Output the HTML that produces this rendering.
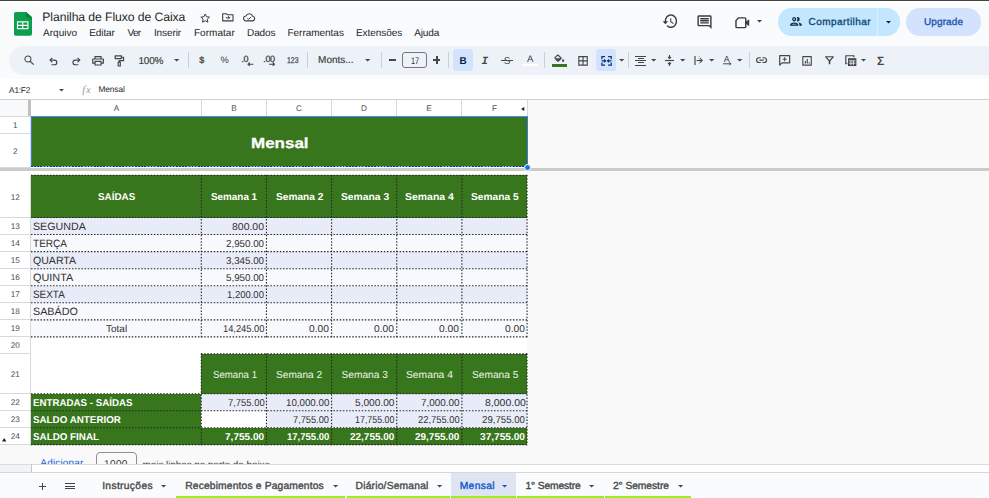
<!DOCTYPE html>
    <html><head><meta charset="utf-8"><title>Planilha de Fluxo de Caixa</title>
    <style>
    *{box-sizing:border-box;margin:0;padding:0}
    html,body{width:989px;height:498px;overflow:hidden;background:#f9fbfd;text-rendering:geometricPrecision;font-family:"Liberation Sans",sans-serif;color:#1f1f1f}
    .abs{position:absolute}
    .t{position:absolute;white-space:nowrap;line-height:1}
    svg{position:absolute;overflow:visible}
    </style></head><body>
    
<div class="abs" style="left:0px;top:0px;width:989px;height:1.1px;background:#454545;"></div>
<div class="abs" style="left:0px;top:1.1px;width:989px;height:1.5px;background:#ffffff;"></div>
<svg style="left:14px;top:11.800px" width="18" height="23.700" viewBox="0 0 18 23.700">
    <path d="M1.800 0H12L18 5.200V21.900a1.800 1.800 0 0 1-1.800 1.800H1.800A1.800 1.800 0 0 1 0 21.900V1.800A1.800 1.800 0 0 1 1.800 0z" fill="#0c9f4e"/>
    <path d="M12 0L18 5.200V8.500L12 5.200z" fill="#0a8a42" opacity="0.55"/>
    <path d="M12 0L18 5.200h-4.400A1.600 1.600 0 0 1 12 3.600z" fill="#07803a"/>
    <path d="M2.900 9.300h11.600v8H2.900z M4.100 10.500v2.200h4v-2.200z M9.300 10.500v2.200h4v-2.200z M4.100 13.900v2.200h4v-2.200z M9.300 13.900v2.200h4v-2.200z" fill="#f3faf5" fill-rule="evenodd"/>
    </svg>
<div class="t" style="left:42.30px;top:11px;font-size:12.2px;color:#1f1f1f;letter-spacing:-0.078px;">Planilha de Fluxo de Caixa</div>
<div class="t" style="left:43.10px;top:29px;font-size:10px;color:#1f1f1f;">Arquivo</div>
<div class="t" style="left:89.20px;top:29px;font-size:10px;color:#1f1f1f;letter-spacing:-0.084px;">Editar</div>
<div class="t" style="left:127.40px;top:29px;font-size:10px;color:#1f1f1f;letter-spacing:-0.605px;">Ver</div>
<div class="t" style="left:153.90px;top:29px;font-size:10px;color:#1f1f1f;letter-spacing:-0.080px;">Inserir</div>
<div class="t" style="left:193.90px;top:29px;font-size:10px;color:#1f1f1f;letter-spacing:0.049px;">Formatar</div>
<div class="t" style="left:247.10px;top:29px;font-size:10px;color:#1f1f1f;letter-spacing:-0.153px;">Dados</div>
<div class="t" style="left:287.50px;top:29px;font-size:10px;color:#1f1f1f;letter-spacing:-0.029px;">Ferramentas</div>
<div class="t" style="left:355.90px;top:29px;font-size:10px;color:#1f1f1f;letter-spacing:-0.049px;">Extensões</div>
<div class="t" style="left:414.30px;top:29px;font-size:10px;color:#1f1f1f;letter-spacing:-0.170px;">Ajuda</div>
<svg style="left:199.900px;top:12.500px" width="10.400" height="10" viewBox="0 0 24 23"><path d="M12 2.200l3 6.400 7 .9-5.200 4.800 1.400 6.900L12 17.800l-6.200 3.400 1.400-6.900L2 9.500l7-.9z" fill="none" stroke="#3a3c3b" stroke-width="2.300" stroke-linejoin="round"/></svg>
<svg style="left:222px;top:13px" width="11.700" height="8.600" viewBox="0 0 26 19"><path d="M1.500 1.500h8l2.500 2.500h12.500v13.500h-23z" fill="none" stroke="#3a3c3b" stroke-width="2.400" stroke-linejoin="round"/><path d="M8.500 10.500h8.500M13.500 7l3.500 3.500-3.500 3.500" fill="none" stroke="#3a3c3b" stroke-width="2.200"/></svg>
<svg style="left:243.400px;top:13px" width="12.600" height="8.600" viewBox="0 0 28 19"><path d="M7 17.500a5.500 5.500 0 0 1-.4-11A8 8 0 0 1 21.500 7 5.300 5.300 0 0 1 21 17.500z" fill="none" stroke="#3a3c3b" stroke-width="2.400"/><path d="M9.500 11l3 3 5.500-5.500" fill="none" stroke="#3a3c3b" stroke-width="2.200"/></svg>
<svg style="left:661.81px;top:12.20px" width="16.46" height="18.40" viewBox="0 0 24 24" preserveAspectRatio="none"><path d="M13 3c-4.970 0-9 4.030-9 9H1l3.890 3.890.07.140L9 12H6c0-3.870 3.130-7 7-7s7 3.130 7 7-3.130 7-7 7c-1.930 0-3.680-.790-4.940-2.060l-1.420 1.420C8.270 19.990 10.510 21 13 21c4.970 0 9-4.030 9-9s-4.030-9-9-9zm-1 5v5l4.280 2.540.720-1.210-3.500-2.080V8H12z" fill="#3a3c3b"/></svg>
<svg style="left:696.08px;top:13.74px" width="17.04" height="16.32" viewBox="0 0 24 24" preserveAspectRatio="none"><path d="M21.990 4c0-1.100-.890-2-1.990-2H4c-1.100 0-2 .900-2 2v12c0 1.100.900 2 2 2h14l4 4-.010-18zM20 4v13.170L18.830 16H4V4h16zM6 12h12v2H6zm0-3h12v2H6zm0-3h12v2H6z" fill="#3a3c3b"/></svg>
<svg style="left:735px;top:16.500px" width="15.200" height="11.500" viewBox="0 0 26 20"><path d="M6 1.500h11a1.500 1.500 0 0 1 1.500 1.500v14a1.500 1.500 0 0 1-1.500 1.500H3A1.500 1.500 0 0 1 1.500 17V6z" fill="none" stroke="#3a3c3b" stroke-width="2.500"/><path d="M18 8.500l6.500-4.500v12L18 11.500z" fill="#3a3c3b"/></svg>
<svg style="left:756.8px;top:20.2px" width="5" height="2.4" viewBox="0 0 5 2.4"><path d="M0 0h5L2.5 2.4z" fill="#3a3c3b"/></svg>
<div class="abs" style="left:778px;top:8px;width:122px;height:27.5px;background:#dcf1ff;border-radius:14px"></div>
<div class="abs" style="left:778px;top:8px;width:99.4px;height:27.5px;background:#c2e7ff;border-radius:14px 0 0 14px"></div>
<div class="abs" style="left:878px;top:8px;width:22.3px;height:27.5px;background:#c2e7ff;border-radius:0 14px 14px 0"></div>
<svg style="left:788.94px;top:14.09px" width="13.92" height="14.91" viewBox="0 0 24 24" preserveAspectRatio="none"><path d="M9 13.750c-2.340 0-7 1.170-7 3.500V19h14v-1.750c0-2.330-4.660-3.500-7-3.500zM4.340 17c.840-.580 2.870-1.250 4.660-1.250s3.820.670 4.660 1.250H4.340zM9 12c1.930 0 3.500-1.570 3.500-3.500S10.930 5 9 5 5.500 6.570 5.500 8.500 7.070 12 9 12zm0-5c.830 0 1.500.670 1.500 1.500S9.830 10 9 10s-1.500-.670-1.500-1.500S8.170 7 9 7zm7.040 6.810c1.160.840 1.960 1.960 1.960 3.440V19h4v-1.750c0-2.020-3.500-3.170-5.960-3.440zM15 12c1.930 0 3.500-1.570 3.500-3.500S16.930 5 15 5c-.540 0-1.040.130-1.500.350.630.890 1 1.980 1 3.150s-.370 2.260-1 3.150c.460.220.960.350 1.500.350z" fill="#0b2a4a"/></svg>
<div class="t" style="left:808.60px;top:18px;font-size:10px;color:#0f4a77;letter-spacing:0.424px;-webkit-text-stroke:0.35px #0f4a77;">Compartilhar</div>
<svg style="left:886px;top:20.8px" width="5" height="2.4" viewBox="0 0 5 2.4"><path d="M0 0h5L2.5 2.4z" fill="#1f1f1f"/></svg>
<div class="abs" style="left:906.3px;top:8px;width:74.4px;height:27.5px;background:#d3e3fd;border-radius:14px"></div>
<div class="t" style="left:924.00px;top:18px;font-size:10px;color:#2455b4;letter-spacing:0.107px;-webkit-text-stroke:0.35px #2455b4;">Upgrade</div>
<div class="abs" style="left:9.3px;top:45.8px;width:990px;height:29.2px;background:#edf2f9;border-radius:14.600px 0 0 14.600px"></div>
<svg style="left:24.200px;top:55.100px" width="10.400" height="10.200" viewBox="0 0 22 21"><circle cx="8.300" cy="8.300" r="6.400" fill="none" stroke="#444746" stroke-width="2.200"/><path d="M13 13l7.500 7" stroke="#444746" stroke-width="2.500"/></svg>
<svg style="left:49px;top:56.600px" width="8.800" height="8.800" viewBox="0 0 20 20"><path d="M3 7h9.500a5.300 5.300 0 0 1 0 10.600H5.500" fill="none" stroke="#444746" stroke-width="2.600"/><path d="M7.500 1.800L2.300 7l5.200 5.200" fill="none" stroke="#444746" stroke-width="2.600"/></svg>
<svg style="left:71.500px;top:56.600px" width="8.800" height="8.800" viewBox="0 0 20 20"><path d="M17 7H7.500a5.300 5.300 0 0 0 0 10.600h7" fill="none" stroke="#444746" stroke-width="2.600"/><path d="M12.500 1.800L17.700 7l-5.200 5.200" fill="none" stroke="#444746" stroke-width="2.600"/></svg>
<svg style="left:92px;top:55.800px" width="12.100" height="9.700" viewBox="0 0 26 21"><path d="M6.500 6.500V1.500h13v5" fill="none" stroke="#444746" stroke-width="2.600"/><path d="M6.500 15.500H1.500V6.500h23v9h-5" fill="none" stroke="#444746" stroke-width="2.600" stroke-linejoin="round"/><path d="M6.500 11.500h13v8h-13z" fill="none" stroke="#444746" stroke-width="2.600"/></svg>
<svg style="left:114.200px;top:54.600px" width="10.500" height="11.900" viewBox="0 0 22 24"><path d="M2.500 1.500h13v5.500h-13z" fill="none" stroke="#444746" stroke-width="2.600" stroke-linejoin="round"/><path d="M15.500 4.200h4.500v7H11v3.300" fill="none" stroke="#444746" stroke-width="2.500"/><path d="M8.800 14.500h4.400v8h-4.400z" fill="none" stroke="#444746" stroke-width="2.400"/></svg>
<div class="t" style="left:138.50px;top:57px;font-size:10px;color:#3a3c3b;letter-spacing:-0.227px;-webkit-text-stroke:0.15px #3a3c3b;">100%</div>
<svg style="left:173.5px;top:59.3px" width="5.4" height="2.6" viewBox="0 0 5.4 2.6"><path d="M0 0h5.4L2.7 2.6z" fill="#444746"/></svg>
<div class="abs" style="left:187.6px;top:52px;width:1px;height:15.5px;background:#cbced3;"></div>
<div class="t" style="left:199.30px;top:56px;font-size:9px;color:#444746;-webkit-text-stroke:0.3px #444746;">$</div>
<div class="t" style="left:220.40px;top:56px;font-size:9.3px;color:#3a3c3b;">%</div>
<div class="t" style="left:241.30px;top:55px;font-size:9px;color:#444746;letter-spacing:-0.206px;-webkit-text-stroke:0.3px #444746;">.0</div>
<svg style="left:246.500px;top:61.800px" width="6.500" height="4.400" viewBox="0 0 13 9"><path d="M13 4.500H2.500M5.500 1L2 4.500 5.500 8" fill="none" stroke="#444746" stroke-width="2.300"/></svg>
<div class="t" style="left:263.30px;top:55px;font-size:9px;color:#444746;letter-spacing:-0.405px;-webkit-text-stroke:0.3px #444746;">.00</div>
<svg style="left:268.500px;top:61.800px" width="6.500" height="4.400" viewBox="0 0 13 9"><path d="M0 4.500h10.500M7.500 1L11 4.500 7.500 8" fill="none" stroke="#444746" stroke-width="2.300"/></svg>
<div class="t" style="left:286.80px;top:56px;font-size:8.4px;color:#444746;transform-origin:0 0;transform:scaleX(0.8208);-webkit-text-stroke:0.25px #444746;">123</div>
<div class="abs" style="left:306.5px;top:52px;width:1px;height:15.5px;background:#cbced3;"></div>
<div class="t" style="left:318.10px;top:56px;font-size:10px;color:#3a3c3b;letter-spacing:-0.024px;-webkit-text-stroke:0.15px #3a3c3b;">Monts...</div>
<svg style="left:365px;top:58.8px" width="5.4" height="2.6" viewBox="0 0 5.4 2.6"><path d="M0 0h5.4L2.7 2.6z" fill="#444746"/></svg>
<div class="abs" style="left:380.6px;top:52px;width:1px;height:15.5px;background:#cbced3;"></div>
<div class="abs" style="left:388.6px;top:59.1px;width:7.7px;height:1.5px;background:#444746;"></div>
<div class="abs" style="left:402.4px;top:52px;width:24.2px;height:16px;background:transparent;border:1px solid #747775;border-radius:3px"></div>
<div class="t" style="left:410.60px;top:57px;font-size:9.6px;color:#303231;transform-origin:0 0;transform:scaleX(0.7681);">17</div>
<div class="abs" style="left:433.1px;top:59.4px;width:7.4px;height:1.5px;background:#444746;"></div>
<div class="abs" style="left:436.05px;top:56.4px;width:1.5px;height:7.4px;background:#444746;"></div>
<div class="abs" style="left:448px;top:52px;width:1px;height:15.5px;background:#cbced3;"></div>
<div class="abs" style="left:452.5px;top:49.3px;width:20.6px;height:21.4px;background:#d3e3fd;border-radius:3px"></div>
<div class="t" style="left:459.60px;top:57px;font-size:10px;color:#041e49;font-weight:bold;">B</div>
<div class="t" style="left:481.40px;top:57px;font-size:11px;color:#444746;font-weight:bold;font-style:italic;font-family:'Liberation Mono',monospace;">I</div>
<div class="t" style="left:503.80px;top:57px;font-size:10px;color:#444746;">S</div>
<div class="abs" style="left:501.4px;top:59.6px;width:11.2px;height:1.2px;background:#444746;"></div>
<div class="t" style="left:526.90px;top:55px;font-size:9.6px;color:#3a3c3b;">A</div>
<div class="abs" style="left:522.8px;top:64.3px;width:15.4px;height:1.6px;background:#ffffff;"></div>
<div class="abs" style="left:544px;top:52px;width:1px;height:15.5px;background:#cbced3;"></div>
<svg style="left:553.600px;top:53.500px" width="11" height="8.500" viewBox="0 0 26 20"><path d="M8.500 1.500l8.500 8.500-6.500 6.500a1.500 1.500 0 0 1-2 0l-6-6a1.500 1.500 0 0 1 0-2l6.500-6.500" fill="none" stroke="#444746" stroke-width="2.700" stroke-linejoin="round"/><path d="M3 10h13.500l-6.500 6.500z" fill="#444746"/><path d="M21.500 11c1.500 2 2.700 3.700 2.700 5.200a2.700 2.700 0 0 1-5.400 0c0-1.500 1.200-3.200 2.700-5.200z" fill="#444746"/></svg>
<div class="abs" style="left:552px;top:64.2px;width:14.6px;height:2.6px;background:#38761d;"></div>
<svg style="left:577.800px;top:55.500px" width="10.100" height="9.800" viewBox="0 0 22 22"><path d="M1.500 1.500h19v19h-19zM11 1.500v19M1.500 11h19" fill="none" stroke="#444746" stroke-width="2.500"/></svg>
<div class="abs" style="left:596px;top:49.3px;width:20.2px;height:21.4px;background:#d3e3fd;border-radius:3px"></div>
<svg style="left:601px;top:55.500px" width="11.100" height="9.800" viewBox="0 0 24 22"><path d="M8.500 1.500H1.500V7.500M15.500 1.500h7V7.500M8.500 20.500H1.500V14.500M15.500 20.500h7V14.500" fill="none" stroke="#0b2f78" stroke-width="2.700"/><path d="M1 11H9.500M6.500 7.500L10 11 6.500 14.500M23 11H14.500M17.500 7.500L14 11l3.500 3.500" fill="none" stroke="#0b2f78" stroke-width="2.500"/></svg>
<svg style="left:618.6px;top:59.2px" width="5.4" height="2.6" viewBox="0 0 5.4 2.6"><path d="M0 0h5.4L2.7 2.6z" fill="#444746"/></svg>
<div class="abs" style="left:628.3px;top:52px;width:1px;height:15.5px;background:#cbced3;"></div>
<div class="abs" style="left:635.4px;top:55.9px;width:11px;height:1.05px;background:#444746;"></div>
<div class="abs" style="left:637.9px;top:58.05px;width:6px;height:1.05px;background:#444746;"></div>
<div class="abs" style="left:635.4px;top:60.199999999999996px;width:11px;height:1.05px;background:#444746;"></div>
<div class="abs" style="left:637.9px;top:62.349999999999994px;width:6px;height:1.05px;background:#444746;"></div>
<div class="abs" style="left:635.4px;top:64.5px;width:11px;height:1.05px;background:#444746;"></div>
<svg style="left:651px;top:59.2px" width="5.4" height="2.6" viewBox="0 0 5.4 2.6"><path d="M0 0h5.4L2.7 2.6z" fill="#444746"/></svg>
<svg style="left:665.400px;top:55px" width="9" height="11" viewBox="0 0 20 24"><path d="M0 12h20" stroke="#444746" stroke-width="2.600"/><path d="M10 0v7M6.500 4L10 7.500 13.500 4M10 24v-7M6.500 20l3.500-3.500 3.500 3.500" fill="none" stroke="#444746" stroke-width="2.400"/></svg>
<svg style="left:680px;top:59.2px" width="5.4" height="2.6" viewBox="0 0 5.4 2.6"><path d="M0 0h5.4L2.7 2.6z" fill="#444746"/></svg>
<svg style="left:693.500px;top:56px" width="9.200" height="9" viewBox="0 0 20 20"><path d="M2 0v20" stroke="#444746" stroke-width="2.600"/><path d="M11.500 0v20" stroke="#444746" stroke-width="1.600" stroke-dasharray="2.500 2.500" opacity="0.700"/><path d="M5.500 10h12.500M13.500 5.500L18 10l-4.500 4.500" fill="none" stroke="#444746" stroke-width="2.400"/></svg>
<svg style="left:708.6px;top:59.2px" width="5.4" height="2.6" viewBox="0 0 5.4 2.6"><path d="M0 0h5.4L2.7 2.6z" fill="#444746"/></svg>
<div class="t" style="left:723.80px;top:55px;font-size:8.8px;color:#444746;">A</div>
<svg style="left:722.800px;top:62.400px" width="9.200" height="3.600" viewBox="0 0 20 8"><path d="M0 4h17.500M14 0.500L17.500 4 14 7.500" fill="none" stroke="#444746" stroke-width="2.200"/></svg>
<svg style="left:737.4px;top:59.2px" width="5.4" height="2.6" viewBox="0 0 5.4 2.6"><path d="M0 0h5.4L2.7 2.6z" fill="#444746"/></svg>
<div class="abs" style="left:748.5px;top:52px;width:1px;height:15.5px;background:#cbced3;"></div>
<svg style="left:756.200px;top:57.200px" width="11.200" height="6.300" viewBox="0 0 26 14"><path d="M11 1.500H7a5.500 5.500 0 0 0 0 11h4M15 1.500h4a5.500 5.500 0 0 1 0 11h-4M8 7h10" fill="none" stroke="#444746" stroke-width="2.700"/></svg>
<svg style="left:778.800px;top:55px" width="11.400" height="10.900" viewBox="0 0 24 23"><path d="M1.500 1.500h21v15h-16l-5 5z" fill="none" stroke="#444746" stroke-width="2.500" stroke-linejoin="round"/><path d="M12 4.800v8.400M7.800 9h8.400" stroke="#444746" stroke-width="2.200"/></svg>
<svg style="left:801.700px;top:55.500px" width="10.100" height="9.800" viewBox="0 0 22 22"><path d="M1.500 1.500h19v19h-19z" fill="none" stroke="#444746" stroke-width="2.500" stroke-linejoin="round"/><path d="M7.200 16.800V11M11.500 16.800V6.500" stroke="#444746" stroke-width="2.600"/><path d="M15.800 16.800v-2.800" stroke="#444746" stroke-width="2.600"/></svg>
<svg style="left:824.500px;top:56.400px" width="9" height="8.900" viewBox="0 0 20 20"><path d="M1.500 1.700h17l-7 8h-3z" fill="none" stroke="#444746" stroke-width="2.700" stroke-linejoin="round"/><path d="M10 9v9.500" stroke="#444746" stroke-width="3.600"/></svg>
<svg style="left:844.500px;top:54.600px" width="11.900" height="11.300" viewBox="0 0 24 23"><path d="M4.500 17.500H1.500V1.500h16.500V4.500" fill="none" stroke="#444746" stroke-width="2.400"/><path d="M6 6.500h17v16H6z" fill="#444746"/><path d="M7.800 11.800h13.400M7.800 16.600h13.400M12 11.800v9M17 11.800v9" stroke="#e4e9f1" stroke-width="1.900"/></svg>
<svg style="left:861px;top:59.2px" width="5" height="2.4" viewBox="0 0 5 2.4"><path d="M0 0h5L2.5 2.4z" fill="#444746"/></svg>
<div class="t" style="left:877.10px;top:55px;font-size:12px;color:#444746;font-weight:bold;">Σ</div>
<div class="abs" style="left:0px;top:79px;width:989px;height:20.5px;background:#fff;"></div>
<div class="abs" style="left:0px;top:99px;width:989px;height:1px;background:#d0d0d0;"></div>
<div class="t" style="left:9.10px;top:86px;font-size:8.3px;color:#1f1f1f;letter-spacing:-0.236px;">A1:F2</div>
<svg style="left:59.3px;top:88.5px" width="5" height="2.4" viewBox="0 0 5 2.4"><path d="M0 0h5L2.5 2.4z" fill="#444746"/></svg>
<div class="t" style="left:82.30px;top:86px;font-size:10.5px;color:#9a9a9a;letter-spacing:0.719px;font-style:italic;font-family:'Liberation Serif',serif;">fx</div>
<div class="t" style="left:98.50px;top:85px;font-size:8.3px;color:#1f1f1f;letter-spacing:-0.092px;">Mensal</div>
<div class="abs" style="left:0px;top:100px;width:989px;height:372px;background:#f8f9f8;"></div>
<div class="abs" style="left:0px;top:100px;width:527px;height:345px;background:#fff;"></div>
<div class="abs" style="left:0px;top:100px;width:28px;height:16px;background:#f8f9fa;"></div>
<div class="abs" style="left:28.2px;top:100px;width:2.8px;height:17px;background:#c0c0c0;"></div>
<div class="abs" style="left:0px;top:116px;width:527px;height:1px;background:#d9d9d9;"></div>
<div class="t" style="left:113.77px;top:105px;font-size:8.2px;color:#505050;">A</div>
<div class="abs" style="left:201px;top:100px;width:1px;height:16px;background:#d9d9d9;"></div>
<div class="t" style="left:231.27px;top:105px;font-size:8.2px;color:#505050;">B</div>
<div class="abs" style="left:266px;top:100px;width:1px;height:16px;background:#d9d9d9;"></div>
<div class="t" style="left:296.04px;top:105px;font-size:8.2px;color:#505050;">C</div>
<div class="abs" style="left:331px;top:100px;width:1px;height:16px;background:#d9d9d9;"></div>
<div class="t" style="left:361.04px;top:105px;font-size:8.2px;color:#505050;">D</div>
<div class="abs" style="left:396px;top:100px;width:1px;height:16px;background:#d9d9d9;"></div>
<div class="t" style="left:426.27px;top:105px;font-size:8.2px;color:#505050;">E</div>
<div class="abs" style="left:461px;top:100px;width:1px;height:16px;background:#d9d9d9;"></div>
<div class="t" style="left:491.99px;top:105px;font-size:8.2px;color:#505050;">F</div>
<div class="abs" style="left:527px;top:100px;width:1px;height:16px;background:#d9d9d9;"></div>
<svg style="left:520.500px;top:106.700px" width="3.300" height="4" viewBox="0 0 3.300 4"><path d="M3.300 0v4L0 2z" fill="#222"/></svg>
<div class="t" style="left:13.02px;top:122px;font-size:8.2px;color:#505050;">1</div>
<div class="abs" style="left:0px;top:133px;width:31px;height:1px;background:#d9d9d9;"></div>
<div class="t" style="left:13.02px;top:148px;font-size:8.2px;color:#505050;">2</div>
<div class="abs" style="left:0px;top:167px;width:31px;height:1px;background:#d9d9d9;"></div>
<div class="t" style="left:10.74px;top:194px;font-size:8.2px;color:#505050;">12</div>
<div class="abs" style="left:0px;top:217px;width:31px;height:1px;background:#d9d9d9;"></div>
<div class="t" style="left:10.74px;top:223px;font-size:8.2px;color:#505050;">13</div>
<div class="abs" style="left:0px;top:234px;width:31px;height:1px;background:#d9d9d9;"></div>
<div class="t" style="left:10.74px;top:240px;font-size:8.2px;color:#505050;">14</div>
<div class="abs" style="left:0px;top:251px;width:31px;height:1px;background:#d9d9d9;"></div>
<div class="t" style="left:10.74px;top:257px;font-size:8.2px;color:#505050;">15</div>
<div class="abs" style="left:0px;top:268px;width:31px;height:1px;background:#d9d9d9;"></div>
<div class="t" style="left:10.74px;top:274px;font-size:8.2px;color:#505050;">16</div>
<div class="abs" style="left:0px;top:285px;width:31px;height:1px;background:#d9d9d9;"></div>
<div class="t" style="left:10.74px;top:291px;font-size:8.2px;color:#505050;">17</div>
<div class="abs" style="left:0px;top:302px;width:31px;height:1px;background:#d9d9d9;"></div>
<div class="t" style="left:10.74px;top:308px;font-size:8.2px;color:#505050;">18</div>
<div class="abs" style="left:0px;top:319px;width:31px;height:1px;background:#d9d9d9;"></div>
<div class="t" style="left:10.74px;top:325px;font-size:8.2px;color:#505050;">19</div>
<div class="abs" style="left:0px;top:336px;width:31px;height:1px;background:#d9d9d9;"></div>
<div class="t" style="left:10.74px;top:342px;font-size:8.2px;color:#505050;">20</div>
<div class="abs" style="left:0px;top:353.4px;width:31px;height:1px;background:#d9d9d9;"></div>
<div class="t" style="left:10.74px;top:371px;font-size:8.2px;color:#505050;">21</div>
<div class="abs" style="left:0px;top:393.2px;width:31px;height:1px;background:#d9d9d9;"></div>
<div class="t" style="left:10.74px;top:399px;font-size:8.2px;color:#505050;">22</div>
<div class="abs" style="left:0px;top:410.2px;width:31px;height:1px;background:#d9d9d9;"></div>
<div class="t" style="left:10.74px;top:416px;font-size:8.2px;color:#505050;">23</div>
<div class="abs" style="left:0px;top:427.2px;width:31px;height:1px;background:#d9d9d9;"></div>
<div class="t" style="left:10.74px;top:433px;font-size:8.2px;color:#505050;">24</div>
<div class="abs" style="left:0px;top:444.2px;width:31px;height:1px;background:#d9d9d9;"></div>
<div class="abs" style="left:30px;top:117px;width:1px;height:329px;background:#d9d9d9;"></div>
<div class="abs" style="left:0px;top:167.7px;width:989px;height:2.9px;background:#cbcbcb;"></div>
<div class="abs" style="left:0px;top:170.5px;width:527px;height:5px;background:#fff;"></div>
<div class="abs" style="left:0px;top:170.5px;width:31px;height:5px;background:#fff;"></div>
<svg style="left:1.600px;top:437.800px" width="4.400" height="3.600" viewBox="0 0 4.400 3.600"><path d="M0 3.600h4.400L2.200 0z" fill="#222"/></svg>
<div class="abs" style="left:31px;top:116px;width:497px;height:51px;background:#38761d;border-top:1px solid #4a8af4;border-left:1px solid #3b78e0;border-right:1px solid #3b78e0"></div>
<div class="abs" style="left:31px;top:166px;width:497px;height:1.300px;background:repeating-linear-gradient(90deg,#0b3c8c 0 1.600px,#7fa6e8 1.600px 3.150px)"></div>
<div class="t" style="left:250.50px;top:137px;font-size:14.6px;color:#fff;transform-origin:0 0;transform:scaleX(1.1638);font-weight:bold;-webkit-text-stroke:0.25px #fff;">Mensal</div>
<div class="abs" style="left:524.300px;top:164.200px;width:7px;height:7px;border-radius:50%;background:#1a73e8;border:1px solid #fff"></div>
<div class="abs" style="left:31px;top:175px;width:496px;height:43px;background:#38761d;"></div>
<div class="t" style="left:97.70px;top:193px;font-size:10px;color:#fff;transform-origin:0 0;transform:scaleX(0.9846);font-weight:bold;">SAÍDAS</div>
<div class="t" style="left:211.10px;top:193px;font-size:10px;color:#fff;transform-origin:0 0;transform:scaleX(0.9874);font-weight:bold;">Semana 1</div>
<div class="t" style="left:275.60px;top:193px;font-size:10px;color:#fff;transform-origin:0 0;transform:scaleX(1.0131);font-weight:bold;">Semana 2</div>
<div class="t" style="left:340.70px;top:193px;font-size:10px;color:#fff;transform-origin:0 0;transform:scaleX(1.0302);font-weight:bold;">Semana 3</div>
<div class="t" style="left:405.20px;top:193px;font-size:10px;color:#fff;transform-origin:0 0;transform:scaleX(1.0452);font-weight:bold;">Semana 4</div>
<div class="t" style="left:471.20px;top:193px;font-size:10px;color:#fff;transform-origin:0 0;transform:scaleX(1.0195);font-weight:bold;">Semana 5</div>
<div class="abs" style="left:31px;top:217.5px;width:496px;height:17.1px;background:#e8ecf8;"></div>
<div class="t" style="left:33.40px;top:222px;font-size:10.6px;color:#303030;transform-origin:0 0;transform:scaleX(1.0073);">SEGUNDA</div>
<div class="t" style="left:232.10px;top:223px;font-size:10px;color:#303030;transform-origin:0 0;transform:scaleX(1.0461);">800.00</div>
<div class="abs" style="left:31px;top:234.56px;width:496px;height:17.1px;background:#f8f9fd;"></div>
<div class="t" style="left:33.40px;top:239px;font-size:10.6px;color:#303030;transform-origin:0 0;transform:scaleX(0.9492);">TERÇA</div>
<div class="t" style="left:226.10px;top:240px;font-size:10px;color:#303030;transform-origin:0 0;transform:scaleX(0.9761);">2,950.00</div>
<div class="abs" style="left:31px;top:251.62px;width:496px;height:17.1px;background:#e8ecf8;"></div>
<div class="t" style="left:33.40px;top:256px;font-size:10.6px;color:#303030;transform-origin:0 0;transform:scaleX(0.9978);">QUARTA</div>
<div class="t" style="left:226.10px;top:257px;font-size:10px;color:#303030;transform-origin:0 0;transform:scaleX(0.9761);">3,345.00</div>
<div class="abs" style="left:31px;top:268.68px;width:496px;height:17.1px;background:#f8f9fd;"></div>
<div class="t" style="left:33.40px;top:273px;font-size:10.6px;color:#303030;transform-origin:0 0;transform:scaleX(1.0264);">QUINTA</div>
<div class="t" style="left:226.10px;top:274px;font-size:10px;color:#303030;transform-origin:0 0;transform:scaleX(0.9761);">5,950.00</div>
<div class="abs" style="left:31px;top:285.74px;width:496px;height:17.1px;background:#e8ecf8;"></div>
<div class="t" style="left:33.40px;top:290px;font-size:10.6px;color:#303030;transform-origin:0 0;transform:scaleX(0.9360);">SEXTA</div>
<div class="t" style="left:227.20px;top:291px;font-size:10px;color:#303030;transform-origin:0 0;transform:scaleX(0.9479);">1,200.00</div>
<div class="abs" style="left:31px;top:302.8px;width:496px;height:17.1px;background:#f8f9fd;"></div>
<div class="t" style="left:33.40px;top:307px;font-size:10.6px;color:#303030;transform-origin:0 0;transform:scaleX(1.0140);">SABÁDO</div>
<div class="abs" style="left:31px;top:319.86px;width:496px;height:17.1px;background:#f8f9fd;"></div>
<div class="t" style="left:105.80px;top:325px;font-size:10px;color:#303030;transform-origin:0 0;transform:scaleX(0.9991);">Total</div>
<div class="t" style="left:222.70px;top:325px;font-size:10px;color:#303030;transform-origin:0 0;transform:scaleX(0.9305);">14,245.00</div>
<div class="t" style="left:309.40px;top:325px;font-size:10px;color:#303030;transform-origin:0 0;transform:scaleX(1.0226);">0.00</div>
<div class="t" style="left:374.40px;top:325px;font-size:10px;color:#303030;transform-origin:0 0;transform:scaleX(1.0226);">0.00</div>
<div class="t" style="left:439.40px;top:325px;font-size:10px;color:#303030;transform-origin:0 0;transform:scaleX(1.0226);">0.00</div>
<div class="t" style="left:505.40px;top:325px;font-size:10px;color:#303030;transform-origin:0 0;transform:scaleX(1.0226);">0.00</div>
<div class="abs" style="left:201px;top:353.9px;width:326px;height:40px;background:#38761d;"></div>
<div class="t" style="left:212.60px;top:371px;font-size:10.2px;color:#eef5e8;transform-origin:0 0;transform:scaleX(0.9484);">Semana 1</div>
<div class="t" style="left:276.10px;top:371px;font-size:10.2px;color:#eef5e8;transform-origin:0 0;transform:scaleX(0.9935);">Semana 2</div>
<div class="t" style="left:341.50px;top:371px;font-size:10.2px;color:#eef5e8;transform-origin:0 0;transform:scaleX(1.0000);">Semana 3</div>
<div class="t" style="left:406.40px;top:371px;font-size:10.2px;color:#eef5e8;transform-origin:0 0;transform:scaleX(1.0107);">Semana 4</div>
<div class="t" style="left:471.80px;top:371px;font-size:10.2px;color:#eef5e8;transform-origin:0 0;transform:scaleX(0.9978);">Semana 5</div>
<div class="abs" style="left:31px;top:393.7px;width:170px;height:51px;background:#38761d;"></div>
<div class="abs" style="left:201px;top:427.7px;width:326px;height:17px;background:#38761d;"></div>
<div class="abs" style="left:201px;top:393.7px;width:326px;height:17px;background:#e8ecf8;"></div>
<div class="abs" style="left:266px;top:410.7px;width:261px;height:17px;background:#e8ecf8;"></div>
<div class="abs" style="left:201px;top:410.7px;width:65px;height:17px;background:#fff;"></div>
<div class="t" style="left:33.40px;top:399px;font-size:10px;color:#fff;transform-origin:0 0;transform:scaleX(0.9733);font-weight:bold;">ENTRADAS - SAÍDAS</div>
<div class="t" style="left:33.40px;top:416px;font-size:10px;color:#fff;transform-origin:0 0;transform:scaleX(0.9807);font-weight:bold;">SALDO ANTERIOR</div>
<div class="t" style="left:33.40px;top:433px;font-size:10px;color:#fff;transform-origin:0 0;transform:scaleX(0.9819);font-weight:bold;">SALDO FINAL</div>
<div class="t" style="left:227.60px;top:399px;font-size:10px;color:#303030;transform-origin:0 0;transform:scaleX(0.9427);">7,755.00</div>
<div class="t" style="left:225.20px;top:433px;font-size:10px;color:#fff;transform-origin:0 0;transform:scaleX(1.0044);font-weight:bold;">7,755.00</div>
<div class="t" style="left:286.00px;top:399px;font-size:10px;color:#303030;transform-origin:0 0;transform:scaleX(0.9733);">10,000.00</div>
<div class="t" style="left:293.40px;top:416px;font-size:10px;color:#303030;transform-origin:0 0;transform:scaleX(0.9222);">7,755.00</div>
<div class="t" style="left:286.90px;top:433px;font-size:10px;color:#fff;transform-origin:0 0;transform:scaleX(0.9530);font-weight:bold;">17,755.00</div>
<div class="t" style="left:354.80px;top:399px;font-size:10px;color:#303030;transform-origin:0 0;transform:scaleX(1.0146);">5,000.00</div>
<div class="t" style="left:354.80px;top:416px;font-size:10px;color:#303030;transform-origin:0 0;transform:scaleX(0.8878);">17,755.00</div>
<div class="t" style="left:350.00px;top:433px;font-size:10px;color:#fff;transform-origin:0 0;transform:scaleX(0.9957);font-weight:bold;">22,755.00</div>
<div class="t" style="left:420.80px;top:399px;font-size:10px;color:#303030;transform-origin:0 0;transform:scaleX(0.9890);">7,000.00</div>
<div class="t" style="left:417.70px;top:416px;font-size:10px;color:#303030;transform-origin:0 0;transform:scaleX(0.9350);">22,755.00</div>
<div class="t" style="left:414.90px;top:433px;font-size:10px;color:#fff;transform-origin:0 0;transform:scaleX(0.9980);font-weight:bold;">29,755.00</div>
<div class="t" style="left:484.50px;top:399px;font-size:10px;color:#303030;transform-origin:0 0;transform:scaleX(1.0480);">8,000.00</div>
<div class="t" style="left:482.30px;top:416px;font-size:10px;color:#303030;transform-origin:0 0;transform:scaleX(0.9665);">29,755.00</div>
<div class="t" style="left:480.30px;top:433px;font-size:10px;color:#fff;transform-origin:0 0;transform:scaleX(1.0115);font-weight:bold;">37,755.00</div>
<svg style="left:0;top:0" width="989" height="498" viewBox="0 0 989 498" fill="none" stroke-width="1.100" stroke-dasharray="1.500 1.650"><path d="M31 175.3H527.6" stroke="#262626"/><path d="M31 217.5H527.6" stroke="#262626"/><path d="M31 234.55H527.6" stroke="#262626"/><path d="M31 251.6H527.6" stroke="#262626"/><path d="M31 268.7H527.6" stroke="#262626"/><path d="M31 285.7H527.6" stroke="#262626"/><path d="M31 302.8H527.6" stroke="#262626"/><path d="M31 319.85H527.6" stroke="#262626"/><path d="M31 336.9H527.6" stroke="#262626"/><path d="M201.3 175V337.4" stroke="#262626"/><path d="M266.45 175V337.4" stroke="#262626"/><path d="M331.6 175V337.4" stroke="#262626"/><path d="M396.75 175V337.4" stroke="#262626"/><path d="M461.9 175V337.4" stroke="#262626"/><path d="M527.05 175V337.4" stroke="#262626"/><path d="M201 353.9H527.6" stroke="#262626"/><path d="M31 393.7H527.6" stroke="#262626"/><path d="M31 410.7H527.6" stroke="#262626"/><path d="M31 427.7H527.6" stroke="#262626"/><path d="M31 444.6H527.6" stroke="#262626"/><path d="M201.3 353.4V445.2" stroke="#262626"/><path d="M266.45 353.4V445.2" stroke="#262626"/><path d="M331.6 353.4V445.2" stroke="#262626"/><path d="M396.75 353.4V445.2" stroke="#262626"/><path d="M461.9 353.4V445.2" stroke="#262626"/><path d="M527.05 353.4V445.2" stroke="#262626"/></svg>
<div class="t" style="left:40.30px;top:459px;font-size:10px;color:#1a62d6;letter-spacing:0.176px;">Adicionar</div>
<div class="abs" style="left:95.5px;top:452.1px;width:41.3px;height:24px;background:#fafafa;border:1px solid #8f8f8f;border-radius:4px"></div>
<div class="t" style="left:104.00px;top:460px;font-size:10px;color:#333;letter-spacing:0.383px;">1000</div>
<div class="t" style="left:142.60px;top:461px;font-size:10px;color:#444;letter-spacing:-0.096px;">mais linhas na parte de baixo</div>
<div class="abs" style="left:0px;top:464.3px;width:989px;height:8px;background:#fff;"></div>
<div class="abs" style="left:0px;top:464.3px;width:31px;height:8px;background:#f1f3f4;"></div>
<div class="abs" style="left:0px;top:464px;width:989px;height:1px;background:#dcdcdc;"></div>
<div class="abs" style="left:31px;top:464.3px;width:1px;height:8px;background:#c4c7c5;"></div>
<div class="abs" style="left:0px;top:471.6px;width:989px;height:27px;background:#f9fbfd;border-top:1px solid #d8d8d8"></div>
<div class="abs" style="left:450.6px;top:472.6px;width:65.8px;height:26px;background:#dfe5f0;"></div>
<div class="abs" style="left:38.8px;top:485.8px;width:7.4px;height:1.3px;background:#444;"></div>
<div class="abs" style="left:41.85px;top:482.7px;width:1.3px;height:7.4px;background:#444;"></div>
<div class="abs" style="left:65.2px;top:483.3px;width:10px;height:1.1px;background:#444;"></div>
<div class="abs" style="left:65.2px;top:485.8px;width:10px;height:1.1px;background:#444;"></div>
<div class="abs" style="left:65.2px;top:488.3px;width:10px;height:1.1px;background:#444;"></div>
<div class="t" style="left:102.20px;top:482px;font-size:10.3px;color:#444746;letter-spacing:0.321px;-webkit-text-stroke:0.35px #444746;">Instruções</div>
<svg style="left:160.8px;top:485.3px" width="5.2" height="2.5" viewBox="0 0 5.2 2.5"><path d="M0 0h5.2L2.6 2.5z" fill="#444746"/></svg>
<div class="t" style="left:185.20px;top:482px;font-size:10.3px;color:#444746;letter-spacing:0.145px;-webkit-text-stroke:0.35px #444746;">Recebimentos e Pagamentos</div>
<svg style="left:332.9px;top:485.3px" width="5.2" height="2.5" viewBox="0 0 5.2 2.5"><path d="M0 0h5.2L2.6 2.5z" fill="#444746"/></svg>
<div class="abs" style="left:176px;top:496.3px;width:169.3px;height:1.8px;background:#9cf01a;"></div>
<div class="t" style="left:355.60px;top:482px;font-size:10.3px;color:#444746;letter-spacing:0.184px;-webkit-text-stroke:0.35px #444746;">Diário/Semanal</div>
<svg style="left:436.9px;top:485.3px" width="5.2" height="2.5" viewBox="0 0 5.2 2.5"><path d="M0 0h5.2L2.6 2.5z" fill="#444746"/></svg>
<div class="abs" style="left:346.8px;top:496.3px;width:103.39999999999998px;height:1.8px;background:#9cf01a;"></div>
<div class="t" style="left:459.70px;top:482px;font-size:10.3px;color:#0b57d0;letter-spacing:0.339px;-webkit-text-stroke:0.35px #0b57d0;">Mensal</div>
<svg style="left:502.2px;top:485.3px" width="5.2" height="2.5" viewBox="0 0 5.2 2.5"><path d="M0 0h5.2L2.6 2.5z" fill="#0b57d0"/></svg>
<div class="abs" style="left:451.4px;top:496.3px;width:64.60000000000002px;height:1.8px;background:#9cf01a;"></div>
<div class="t" style="left:525.50px;top:482px;font-size:10.3px;color:#444746;letter-spacing:-0.158px;-webkit-text-stroke:0.35px #444746;">1° Semestre</div>
<svg style="left:589.2px;top:485.3px" width="5.2" height="2.5" viewBox="0 0 5.2 2.5"><path d="M0 0h5.2L2.6 2.5z" fill="#444746"/></svg>
<div class="abs" style="left:517.4px;top:496.3px;width:86.60000000000002px;height:1.8px;background:#9cf01a;"></div>
<div class="t" style="left:612.90px;top:482px;font-size:10.3px;color:#444746;letter-spacing:-0.068px;-webkit-text-stroke:0.35px #444746;">2° Semestre</div>
<svg style="left:678.1px;top:485.3px" width="5.2" height="2.5" viewBox="0 0 5.2 2.5"><path d="M0 0h5.2L2.6 2.5z" fill="#444746"/></svg>
<div class="abs" style="left:605px;top:496.3px;width:86.39999999999998px;height:1.8px;background:#9cf01a;"></div>
</body></html>
